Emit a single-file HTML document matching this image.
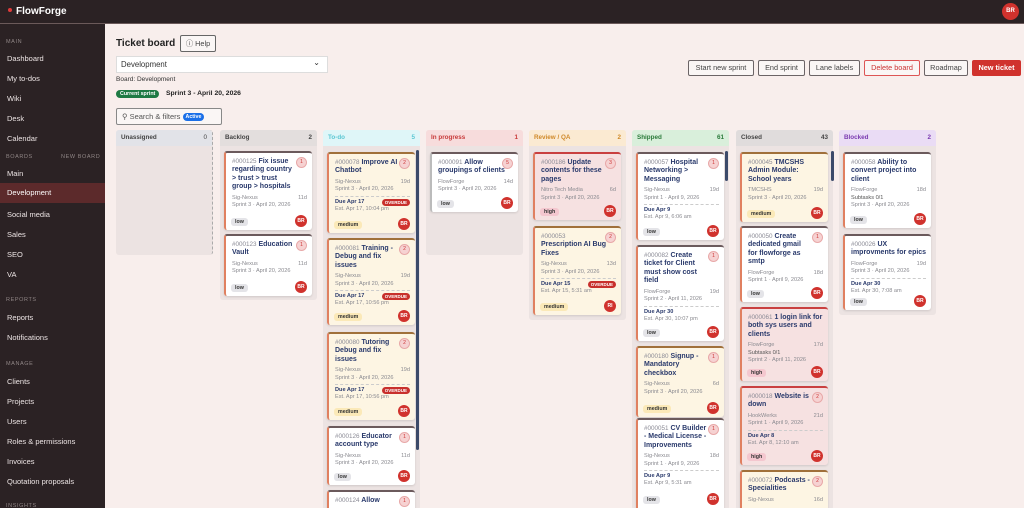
<!DOCTYPE html>
<html><head><meta charset="utf-8"><style>
*{box-sizing:border-box;margin:0;padding:0}
html{width:1024px;height:508px;overflow:hidden}
body{width:1024px;height:508px;overflow:hidden;background:#f8eeec;font-family:"Liberation Sans",sans-serif;position:relative}
.top{position:absolute;left:0;top:0;width:1024px;height:24px;background:#2b2224;border-bottom:1px solid #6b5a5a}
.logo{position:absolute;left:8px;top:6px;color:#fff;font-weight:bold;font-size:10px}
.logo b{display:inline-block;width:4px;height:4px;border-radius:50%;background:#e03b3b;margin-right:4px;vertical-align:2px}
.av{position:absolute;right:5px;top:3px;width:17px;height:17px;border-radius:50%;background:#d0322d;color:#fff;font-size:6px;font-weight:bold;text-align:center;line-height:17px}
.side{position:absolute;left:0;top:24px;width:105px;height:484px;background:#2b2224;overflow:hidden}
.side div{position:absolute;left:7px;color:#ece4e4;font-size:7.5px}
.side .h{color:#8f8585;font-size:5.5px;letter-spacing:.6px;left:6px}
.side .act{left:0;width:105px;height:20px;background:#5c2a2b;padding-left:7px;line-height:20px;color:#fff}
.abs{position:absolute}
.btn{position:absolute;top:60px;height:16px;border:1px solid #6b6466;border-radius:2px;font-size:7.3px;color:#444;line-height:14px;text-align:center;background:#faf6f5;white-space:nowrap}
.col{position:absolute;top:130px;width:97px;border-radius:3px;background:#ece3e2}
.ch{height:16px;border-radius:3px 3px 0 0;font-size:6.3px;font-weight:bold;line-height:16px;padding:0 5px;display:flex;justify-content:space-between}
.c{position:absolute;width:88px;background:#fff;border-radius:3px;border-left:2px solid #e08060;border-top:2px solid #6b5a5c;padding:5px 5px 0 6px;font-size:5.6px;color:#8a8a90;box-shadow:0 1px 2px rgba(0,0,0,.12);overflow:hidden}
.c.y{background:#fdf5e3;border-top-color:#a0703a}
.c.p{background:#f6e1e1;border-top-color:#c94040}
.t{font-size:7px;font-weight:bold;color:#2a3a6c;line-height:8.4px;width:64px;margin-bottom:3px}
.t i{font-style:normal;font-weight:normal;color:#8a8a95;font-size:6.3px}
.n{position:absolute;right:5px;top:4px;width:11px;height:11px;border-radius:50%;background:#f6d2d2;border:1px solid #e8a8a8;color:#c33;font-size:5px;text-align:center;line-height:9px}
.m{display:flex;justify-content:space-between;line-height:7.5px}
.d{border-top:1px dashed #ccc;margin-top:2px;padding-top:2px;line-height:7px}
.d b{color:#2a3a6c}
.ov{position:absolute;right:5px;background:#c8302c;color:#fff;font-size:4.5px;font-weight:bold;border-radius:4px;padding:0 3px;line-height:7px}
.tag{position:absolute;left:5px;bottom:4px;font-size:5.3px;font-weight:bold;color:#333;border-radius:3px;padding:0 4px;line-height:8px;background:#e4e4e8}
.tag.md{background:#fbe9b8}.tag.hi{background:#f4c7cf}
.b{position:absolute;right:5px;bottom:3px;width:12px;height:12px;border-radius:50%;background:#d0322d;color:#fff;font-size:5px;font-weight:bold;text-align:center;line-height:12px}
.sb{position:absolute;width:3px;background:#3c4a6a;border-radius:2px}
</style></head><body>
<div class="top"><div class="logo"><b></b>FlowForge</div><div class="av">BR</div></div>
<div class="side">
<div class="h" style="top:15px">MAIN</div>
<div style="top:30px">Dashboard</div><div style="top:50px">My to-dos</div><div style="top:70px">Wiki</div><div style="top:90px">Desk</div><div style="top:110px">Calendar</div>
<div class="h" style="top:130px">BOARDS</div><div class="h" style="top:130px;left:61px">NEW BOARD</div>
<div style="top:145px">Main</div>
<div class="act" style="top:159px">Development</div>
<div style="top:186px">Social media</div><div style="top:206px">Sales</div><div style="top:226px">SEO</div><div style="top:246px">VA</div>
<div class="h" style="top:273px">REPORTS</div>
<div style="top:289px">Reports</div><div style="top:309px">Notifications</div>
<div class="h" style="top:337px">MANAGE</div>
<div style="top:353px">Clients</div><div style="top:373px">Projects</div><div style="top:393px">Users</div><div style="top:413px">Roles &amp; permissions</div><div style="top:433px">Invoices</div><div style="top:453px">Quotation proposals</div>
<div class="h" style="top:479px">INSIGHTS</div>
</div>

<div class="abs" style="left:116px;top:38px;font-size:10px;font-weight:bold;color:#222">Ticket board</div>
<div class="abs" style="left:180px;top:35px;width:36px;height:17px;border:1px solid #666;border-radius:2px;font-size:7.3px;color:#444;line-height:15px;text-align:center;background:#faf6f5">&#9432; Help</div>
<div class="abs" style="left:116px;top:56px;width:212px;height:17px;background:#fff;border:1px solid #ddd;font-size:7.8px;color:#333;line-height:15px;padding-left:4px">Development<span style="position:absolute;right:7px;top:-2px;font-size:8px">&#8964;</span></div>
<div class="abs" style="left:116px;top:76px;font-size:6.5px;color:#333">Board: <b style="font-weight:normal">Development</b></div>
<div class="abs" style="left:116px;top:90px;background:#1e7a44;color:#fff;font-size:5.3px;font-weight:bold;border-radius:4px;padding:0 4px;line-height:8px">Current sprint</div>
<div class="abs" style="left:166px;top:90px;font-size:6.8px;font-weight:bold;color:#222">Sprint 3 - April 20, 2026</div>
<div class="abs" style="left:116px;top:108px;width:106px;height:17px;border:1px solid #888;border-radius:2px;background:#faf6f5;font-size:7.5px;color:#555;line-height:15px;padding-left:5px">&#9906; Search &amp; filters <span style="background:#1a6fe8;color:#fff;font-size:5.3px;font-weight:bold;border-radius:4px;padding:0 3px;line-height:8px;display:inline-block;vertical-align:1px">Active</span></div>

<div class="btn" style="left:688px;width:66px">Start new sprint</div>
<div class="btn" style="left:758px;width:47px">End sprint</div>
<div class="btn" style="left:809px;width:51px">Lane labels</div>
<div class="btn" style="left:864px;width:56px;color:#c33;border-color:#d55">Delete board</div>
<div class="btn" style="left:924px;width:44px">Roadmap</div>
<div class="btn" style="left:972px;width:49px;background:#d0322d;border-color:#d0322d;color:#fff;font-weight:bold">New ticket</div>

<div class="col" style="left:116px;height:125px;border-right:1px dashed #aaa"><div class="ch" style="background:#e2e3e8;color:#444"><span>Unassigned</span><span style="font-weight:normal">0</span></div></div>
<div class="col" style="left:220px;height:170px"><div class="ch" style="background:#e3dedd;color:#444"><span>Backlog</span><span>2</span></div></div>
<div class="col" style="left:323px;height:380px"><div class="ch" style="background:#dff6f8;color:#5bc7d3"><span>To-do</span><span>5</span></div></div>
<div class="col" style="left:426px;height:125px"><div class="ch" style="background:#f7dcdc;color:#c83a3a"><span>In progress</span><span>1</span></div></div>
<div class="col" style="left:529px;height:190px"><div class="ch" style="background:#fbead2;color:#d08a2a"><span>Review / QA</span><span>2</span></div></div>
<div class="col" style="left:632px;height:380px"><div class="ch" style="background:#d9efdb;color:#2a7a3a"><span>Shipped</span><span>61</span></div></div>
<div class="col" style="left:736px;height:380px"><div class="ch" style="background:#e0dcdc;color:#444"><span>Closed</span><span>43</span></div></div>
<div class="col" style="left:839px;height:185px"><div class="ch" style="background:#eadcf5;color:#7a3ab0"><span>Blocked</span><span>2</span></div></div>
<div class="sb" style="left:416px;top:150px;height:300px"></div>
<div class="sb" style="left:725px;top:151px;height:30px"></div>
<div class="sb" style="left:831px;top:151px;height:30px"></div>

<div class="c" style="left:224px;top:151px;height:79px"><div class="t"><i>#000125</i> Fix issue regarding country &gt; trust &gt; trust group &gt; hospitals</div><div class="n">1</div><div class="m"><span>Sig-Nexus</span><span>11d</span></div><div class="m"><span>Sprint 3 · April 20, 2026</span></div><span class="tag">low</span><span class="b">BR</span></div>
<div class="c" style="left:224px;top:234px;height:62px"><div class="t"><i>#000123</i> Education Vault</div><div class="n">1</div><div class="m"><span>Sig-Nexus</span><span>11d</span></div><div class="m"><span>Sprint 3 · April 20, 2026</span></div><span class="tag">low</span><span class="b">BR</span></div>

<div class="c y" style="left:327px;top:152px;height:81px"><div class="t"><i>#000078</i> Improve AI Chatbot</div><div class="n">2</div><div class="m"><span>Sig-Nexus</span><span>19d</span></div><div class="m"><span>Sprint 3 · April 20, 2026</span></div><div class="d"><b>Due Apr 17</b><span class="ov">OVERDUE</span><br>Est. Apr 17, 10:04 pm</div><span class="tag md">medium</span><span class="b">BR</span></div>
<div class="c y" style="left:327px;top:238px;height:87px"><div class="t"><i>#000081</i> Training - Debug and fix issues</div><div class="n">2</div><div class="m"><span>Sig-Nexus</span><span>19d</span></div><div class="m"><span>Sprint 3 · April 20, 2026</span></div><div class="d"><b>Due Apr 17</b><span class="ov">OVERDUE</span><br>Est. Apr 17, 10:56 pm</div><span class="tag md">medium</span><span class="b">BR</span></div>
<div class="c y" style="left:327px;top:332px;height:88px"><div class="t"><i>#000080</i> Tutoring Debug and fix issues</div><div class="n">2</div><div class="m"><span>Sig-Nexus</span><span>19d</span></div><div class="m"><span>Sprint 3 · April 20, 2026</span></div><div class="d"><b>Due Apr 17</b><span class="ov">OVERDUE</span><br>Est. Apr 17, 10:56 pm</div><span class="tag md">medium</span><span class="b">BR</span></div>
<div class="c" style="left:327px;top:426px;height:59px"><div class="t"><i>#000126</i> Educator account type</div><div class="n">1</div><div class="m"><span>Sig-Nexus</span><span>11d</span></div><div class="m"><span>Sprint 3 · April 20, 2026</span></div><span class="tag">low</span><span class="b">BR</span></div>
<div class="c" style="left:327px;top:490px;height:30px"><div class="t"><i>#000124</i> Allow</div><div class="n">1</div></div>

<div class="c" style="left:430px;top:152px;height:60px;border-left-color:#bbb"><div class="t" style="width:70px"><i>#000091</i> Allow groupings of clients</div><div class="n">5</div><div class="m"><span>FlowForge</span><span>14d</span></div><div class="m"><span>Sprint 3 · April 20, 2026</span></div><span class="tag">low</span><span class="b">BR</span></div>

<div class="c p" style="left:533px;top:152px;height:68px"><div class="t" style="width:70px"><i>#000186</i> Update contents for these pages</div><div class="n">3</div><div class="m"><span>Nitro Tech Media</span><span>6d</span></div><div class="m"><span>Sprint 3 · April 20, 2026</span></div><span class="tag hi">high</span><span class="b">BR</span></div>
<div class="c y" style="left:533px;top:226px;height:89px"><div class="t" style="width:72px"><i>#000053</i><br>Prescription AI Bug Fixes</div><div class="n">2</div><div class="m"><span>Sig-Nexus</span><span>13d</span></div><div class="m"><span>Sprint 3 · April 20, 2026</span></div><div class="d"><b>Due Apr 15</b><span class="ov">OVERDUE</span><br>Est. Apr 15, 5:31 am</div><span class="tag md">medium</span><span class="b">RI</span></div>

<div class="c" style="left:636px;top:152px;height:88px"><div class="t"><i>#000057</i> Hospital Networking &gt; Messaging</div><div class="n">1</div><div class="m"><span>Sig-Nexus</span><span>19d</span></div><div class="m"><span>Sprint 1 · April 9, 2026</span></div><div class="d"><b>Due Apr 9</b><br>Est. Apr 9, 6:06 am</div><span class="tag">low</span><span class="b">BR</span></div>
<div class="c" style="left:636px;top:245px;height:96px"><div class="t"><i>#000082</i> Create ticket for Client must show cost field</div><div class="n">1</div><div class="m"><span>FlowForge</span><span>19d</span></div><div class="m"><span>Sprint 2 · April 11, 2026</span></div><div class="d"><b>Due Apr 30</b><br>Est. Apr 30, 10:07 pm</div><span class="tag">low</span><span class="b">BR</span></div>
<div class="c y" style="left:636px;top:346px;height:71px"><div class="t"><i>#000180</i> Signup - Mandatory checkbox</div><div class="n">1</div><div class="m"><span>Sig-Nexus</span><span>6d</span></div><div class="m"><span>Sprint 3 · April 20, 2026</span></div><span class="tag md">medium</span><span class="b">BR</span></div>
<div class="c" style="left:636px;top:418px;height:95px"><div class="t"><i>#000051</i> CV Builder - Medical License - Improvements</div><div class="n">1</div><div class="m"><span>Sig-Nexus</span><span>18d</span></div><div class="m"><span>Sprint 1 · April 9, 2026</span></div><div class="d"><b>Due Apr 9</b><br>Est. Apr 9, 5:31 am</div><span class="tag" style="bottom:9px">low</span><span class="b" style="bottom:8px">BR</span></div>

<div class="c y" style="left:740px;top:152px;height:70px"><div class="t"><i>#000045</i> TMCSHS Admin Module: School years</div><div class="m"><span>TMCSHS</span><span>19d</span></div><div class="m"><span>Sprint 3 · April 20, 2026</span></div><span class="tag md">medium</span><span class="b">BR</span></div>
<div class="c" style="left:740px;top:226px;height:76px"><div class="t"><i>#000050</i> Create dedicated gmail for flowforge as smtp</div><div class="n">1</div><div class="m"><span>FlowForge</span><span>18d</span></div><div class="m"><span>Sprint 1 · April 9, 2026</span></div><span class="tag">low</span><span class="b">BR</span></div>
<div class="c p" style="left:740px;top:307px;height:74px"><div class="t" style="width:76px"><i>#000061</i> 1 login link for both sys users and clients</div><div class="m"><span>FlowForge</span><span>17d</span></div><div class="m"><span style="color:#555">Subtasks 0/1</span></div><div class="m"><span>Sprint 2 · April 11, 2026</span></div><span class="tag hi">high</span><span class="b">BR</span></div>
<div class="c p" style="left:740px;top:386px;height:79px"><div class="t"><i>#000018</i> Website is down</div><div class="n">2</div><div class="m"><span>HookWerks</span><span>21d</span></div><div class="m"><span>Sprint 1 · April 9, 2026</span></div><div class="d"><b>Due Apr 8</b><br>Est. Apr 8, 12:10 am</div><span class="tag hi">high</span><span class="b">BR</span></div>
<div class="c y" style="left:740px;top:470px;height:45px"><div class="t"><i>#000072</i> Podcasts - Specialities</div><div class="n">2</div><div class="m"><span>Sig-Nexus</span><span>16d</span></div></div>

<div class="c" style="left:843px;top:152px;height:76px"><div class="t" style="width:72px"><i>#000058</i> Ability to convert project into client</div><div class="m"><span>FlowForge</span><span>18d</span></div><div class="m"><span style="color:#555">Subtasks 0/1</span></div><div class="m"><span>Sprint 3 · April 20, 2026</span></div><span class="tag">low</span><span class="b">BR</span></div>
<div class="c" style="left:843px;top:234px;height:76px"><div class="t" style="width:76px"><i>#000026</i> UX improvments for epics</div><div class="m"><span>FlowForge</span><span>19d</span></div><div class="m"><span>Sprint 3 · April 20, 2026</span></div><div class="d"><b>Due Apr 30</b><br>Est. Apr 30, 7:08 am</div><span class="tag">low</span><span class="b">BR</span></div>
</body></html>
